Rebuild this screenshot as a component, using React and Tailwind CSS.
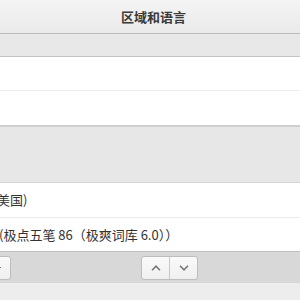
export default function App() {
  const font = { fontFamily: '"Noto Sans CJK SC", "Noto Sans", sans-serif' };
  return (
    <div className="w-[300px] h-[300px] overflow-hidden bg-white flex flex-col text-[#333]" style={font}>
      <div className="h-[34px] shrink-0 bg-gradient-to-b from-[#f4f4f4] to-[#eaeaea] flex items-center justify-center pl-[7px] text-[13px] font-bold text-[#3a3a3a] border-b border-[#bcbcbc]">
        区域和语言
      </div>
      <div className="h-[23px] shrink-0 bg-[#e8e8e8] border-b border-[#c4c4c4]" />
      <div className="h-[34px] shrink-0 bg-white border-b border-[#ececec]" />
      <div className="h-[34px] shrink-0 bg-white" />
      <div className="h-[58px] shrink-0 bg-[#e7e7e7] border-t-2 border-[#cfcfcf] border-b border-b-[#d6d6d6]" />
      <div className="h-[35px] shrink-0 bg-white border-b border-[#ececec] flex items-center overflow-hidden">
        <span className="text-[13px] ml-[-3px] whitespace-nowrap">美国)</span>
      </div>
      <div className="h-[33px] shrink-0 bg-white flex items-center overflow-hidden">
        <span className="text-[13px] ml-[-1px] whitespace-nowrap">(极点五笔 86（极爽词库 6.0））</span>
      </div>
      <div className="h-[32px] shrink-0 bg-[#d8d8d8] border-t border-[#c2c2c2] flex items-center">
        <div className="w-[20px] h-[24px] ml-[-9px] rounded-[3px] border border-[#bdbdbd] bg-gradient-to-b from-[#fafafa] to-[#efefef] flex items-center justify-end pr-[9px]">
          <div className="w-[3px] h-[1px] bg-[#777]" />
        </div>
        <div className="ml-[130px] h-[24px] flex rounded-[3px] border border-[#bdbdbd] bg-gradient-to-b from-[#fafafa] to-[#efefef]">
          <div className="w-[28px] flex items-center justify-center border-r border-[#c8c8c8]">
            <svg width="10" height="6" viewBox="0 0 10 6" fill="none" stroke="#777" strokeWidth="1.6"><path d="M1 5.2 L5 1.2 L9 5.2" /></svg>
          </div>
          <div className="w-[27px] flex items-center justify-center">
            <svg width="10" height="6" viewBox="0 0 10 6" fill="none" stroke="#777" strokeWidth="1.6"><path d="M1 0.8 L5 4.8 L9 0.8" /></svg>
          </div>
        </div>
      </div>
      <div className="flex-1 bg-[#ededed]" />
    </div>
  );
}
